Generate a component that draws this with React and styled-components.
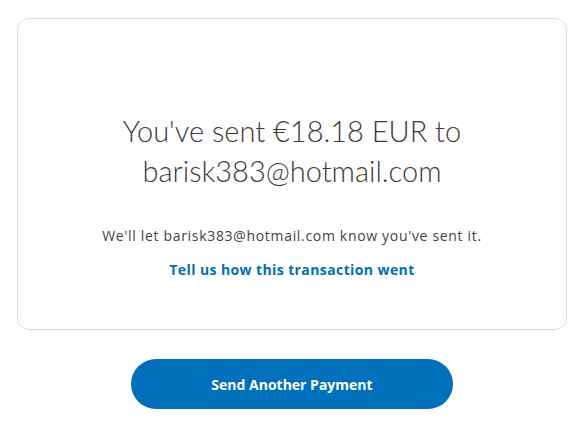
import React from "react";
import styled, { createGlobalStyle } from "styled-components";

const Global = createGlobalStyle`
  html, body { margin: 0; padding: 0; background: #fff; }
  body { font-family: "Open Sans", "Liberation Sans", sans-serif; }
`;

const Page = styled.div`
  width: 586px;
  padding: 18px 19px 0 17px;
  box-sizing: border-box;
  display: flex;
  flex-direction: column;
  align-items: center;
`;

const Card = styled.section`
  width: 100%;
  height: 312px;
  box-sizing: border-box;
  border: 1px solid #dcdad4;
  border-radius: 12px;
  display: flex;
  flex-direction: column;
  align-items: center;
  padding-top: 92px;
`;

const Heading = styled.h1`
  margin: 0;
  font-family: "Lato", "Open Sans", sans-serif;
  font-weight: 300;
  font-size: 29px;
  line-height: 40px;
  color: #3b3b3b;
  text-align: center;
`;

const Note = styled.p`
  margin: 35px 0 0;
  font-size: 14px;
  line-height: 20px;
  color: #444;
  letter-spacing: 0.68px;
`;

const Link = styled.a`
  margin-top: 14px;
  font-size: 14px;
  line-height: 20px;
  font-weight: 700;
  color: #0070ba;
  letter-spacing: 0.4px;
  text-decoration: none;
`;

const Button = styled.button`
  margin-top: 29px;
  width: 322px;
  height: 50px;
  border: none;
  border-radius: 25px;
  background: #0070ba;
  color: #fff;
  font-family: "Open Sans", sans-serif;
  font-weight: 700;
  font-size: 14px;
`;

export default function App() {
  return (
    <>
      <Global />
      <Page>
        <Card>
          <Heading>
            You've sent €18.18 EUR to
            <br />
            barisk383@hotmail.com
          </Heading>
          <Note>We'll let barisk383@hotmail.com know you've sent it.</Note>
          <Link href="#">Tell us how this transaction went</Link>
        </Card>
        <Button>Send Another Payment</Button>
      </Page>
    </>
  );
}
